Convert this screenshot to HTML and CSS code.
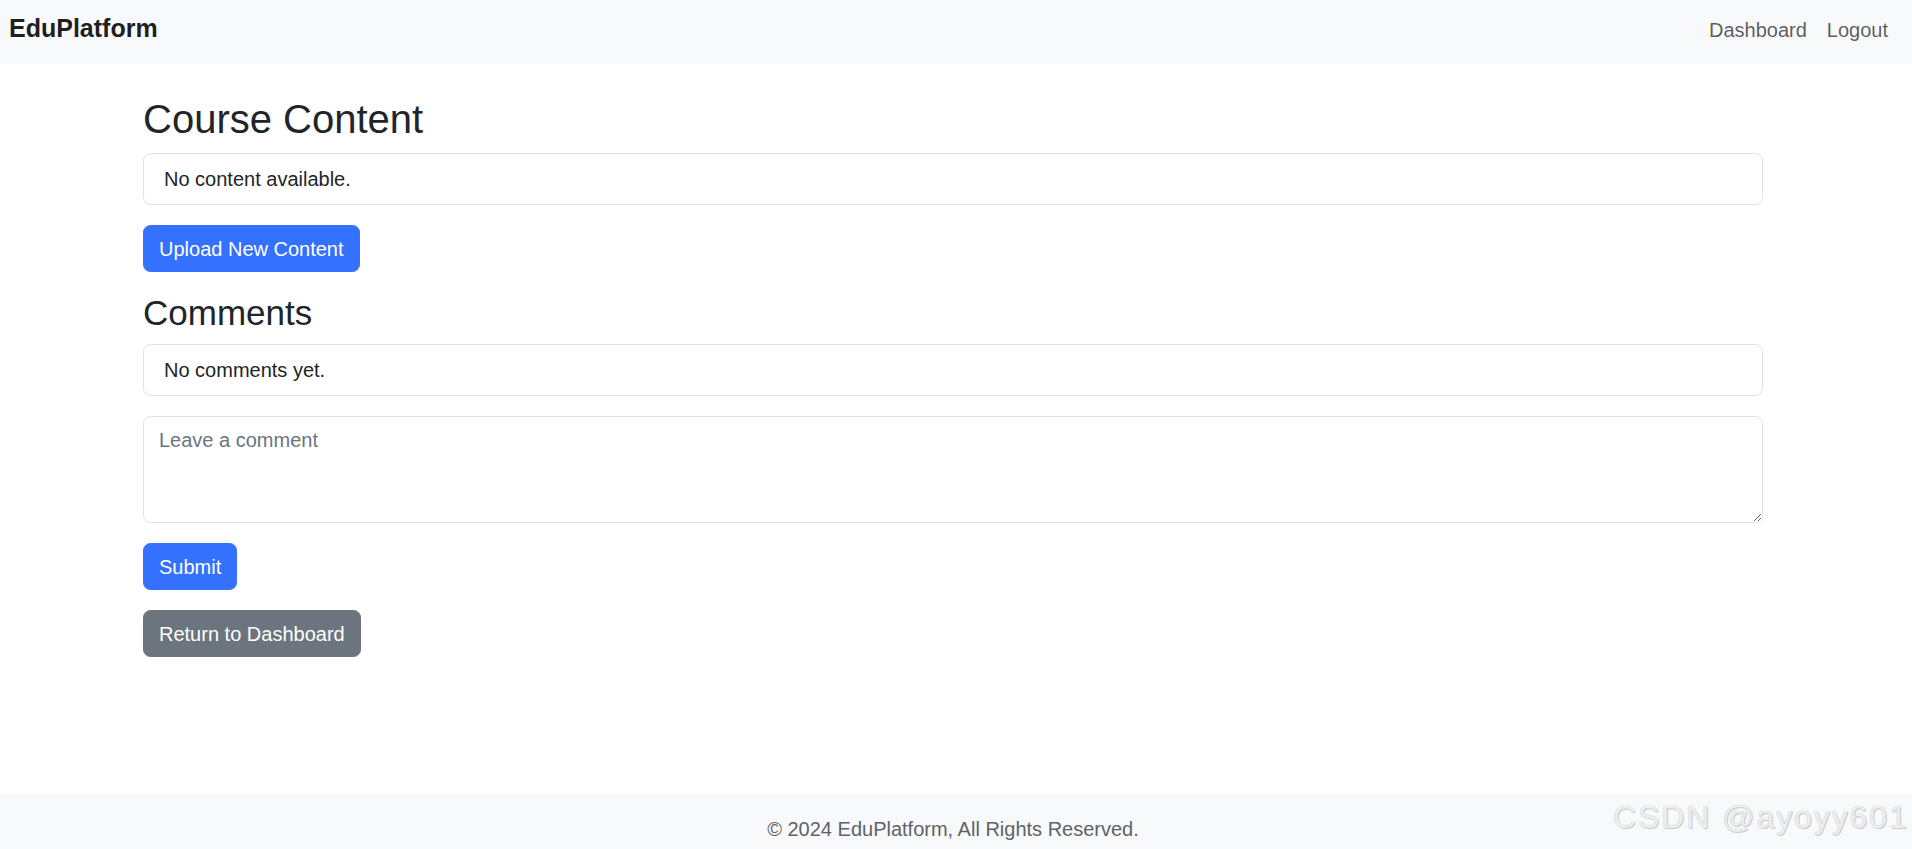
FILE: index.html
```html
<!DOCTYPE html>
<html lang="en">
<head>
<meta charset="utf-8">
<title>Course Content - EduPlatform</title>
<link rel="stylesheet" href="styles.css">
</head>
<body>
<nav class="navbar">
  <a class="brand" href="#">EduPlatform</a>
  <ul class="nav-links">
    <li><a class="nav-link" href="#">Dashboard</a></li>
    <li><a class="nav-link" href="#">Logout</a></li>
  </ul>
</nav>

<main class="container">
  <h2 class="title-lg">Course Content</h2>
  <ul class="list-group">
    <li class="list-item">No content available.</li>
  </ul>
  <a class="btn btn-primary" href="#">Upload New Content</a>

  <h3 class="title-md">Comments</h3>
  <ul class="list-group">
    <li class="list-item">No comments yet.</li>
  </ul>
  <form class="comment-form">
    <textarea class="form-control" rows="3" placeholder="Leave a comment"></textarea>
    <button type="submit" class="btn btn-primary">Submit</button>
  </form>
  <a class="btn btn-secondary" href="#">Return to Dashboard</a>
</main>

<footer class="footer">
  <p class="footer-text">© 2024 EduPlatform, All Rights Reserved.</p>
</footer>

<div class="watermark">CSDN @ayoyy601</div>
</body>
</html>
```

FILE: styles.css
```css
* {
  box-sizing: border-box;
}

html, body {
  margin: 0;
  padding: 0;
}

body {
  font-family: "Liberation Sans", Arial, sans-serif;
  font-size: 20px;
  line-height: 1.5;
  color: #212529;
  background: #fff;
  position: relative;
}

a {
  text-decoration: none;
}

/* Navbar */
.navbar {
  height: 64px;
  background: #f8f9fa;
  display: flex;
  align-items: flex-start;
  justify-content: space-between;
  padding: 10px 14px 0 9px;
}

.brand {
  font-size: 25px;
  font-weight: 700;
  line-height: 37.5px;
  color: rgba(0, 0, 0, 0.9);
}

.nav-links {
  list-style: none;
  margin: 5px 0 0 0;
  padding: 0;
  display: flex;
}

.nav-link {
  display: block;
  padding: 0 10px;
  line-height: 30px;
  color: rgba(0, 0, 0, 0.65);
}

/* Main */
.container {
  width: 1620px;
  margin: 0 0 0 143px;
  padding: 31px 0 0 0;
  min-height: 730px;
}

.title-lg {
  font-size: 40px;
  font-weight: 500;
  line-height: 1.2;
  margin: 0 0 10px 0;
}

.title-md {
  font-size: 35px;
  font-weight: 500;
  line-height: 1.2;
  margin: 20px 0 10px 0;
}

.list-group {
  list-style: none;
  margin: 0;
  padding: 0;
}

.list-item {
  border: 1px solid #dee2e6;
  border-radius: 7.5px;
  padding: 10px 20px;
  line-height: 30px;
  background: #fff;
}

.btn {
  display: inline-block;
  font-family: inherit;
  font-size: 20px;
  line-height: 30px;
  padding: 7.5px 15px;
  border: 1px solid transparent;
  border-radius: 7.5px;
  color: #fff;
  cursor: pointer;
  margin-top: 20px;
  vertical-align: top;
}

.btn-primary {
  background: #3371fe;
  border-color: #3371fe;
}

.btn-secondary {
  background: #6c757d;
  border-color: #6c757d;
}

.comment-form {
  margin: 20px 0 0 0;
}

.form-control {
  display: block;
  width: 100%;
  height: 107px;
  font-family: inherit;
  font-size: 20px;
  line-height: 30px;
  padding: 7.5px 15px;
  color: #212529;
  border: 1px solid #dee2e6;
  border-radius: 7.5px;
  resize: vertical;
  margin: 0;
}

.form-control::placeholder {
  color: #6c757d;
}

/* Footer */
.footer {
  background: #f8f9fa;
  text-align: center;
  padding: 20px 6px 20px 0;
}

.footer-text {
  margin: 0;
  line-height: 30px;
  color: #5e6369;
}

/* Screenshot watermark overlay */
.watermark {
  position: absolute;
  left: 1613px;
  top: 801px;
  font-size: 32px;
  line-height: 32px;
  letter-spacing: 1.9px;
  color: #eeeeee;
  text-shadow: 0 0 1px #b4b4b4, 1px 1px 0 #cfcfcf;
  white-space: nowrap;
  pointer-events: none;
}
```
